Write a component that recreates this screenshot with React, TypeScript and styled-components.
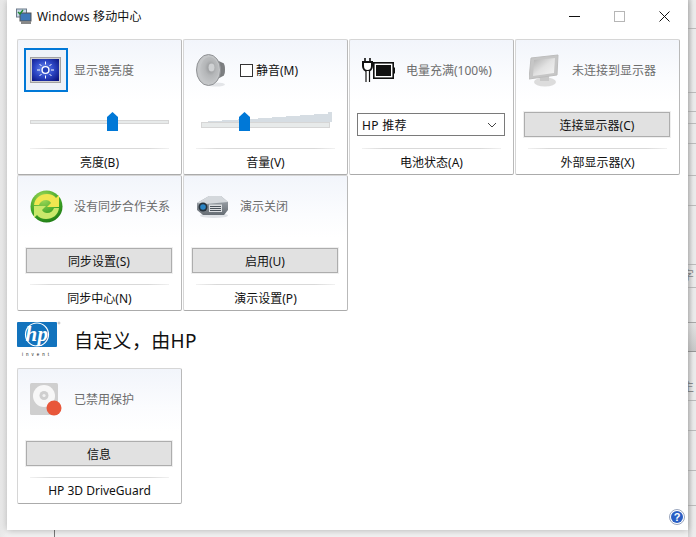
import React from "react";
import styled, { createGlobalStyle } from "styled-components";

const GlobalStyle = createGlobalStyle`
  html, body {
    margin: 0;
    padding: 0;
    background: #f0f0f0;
  }
  body {
    width: 696px;
    height: 537px;
    overflow: hidden;
    font-family: "Noto Sans", "Noto Sans CJK SC", sans-serif;
  }
`;

const Desktop = styled.div`
  width: 696px;
  height: 537px;
  position: relative;
  overflow: hidden;
  background: linear-gradient(90deg, #e8e8e8 0, #f1f1f1 7px);
`;

const BackgroundStrip = styled.div`
  position: absolute;
  top: 0;
  right: 0;
  width: 8px;
  height: 537px;
  overflow: hidden;
  background: linear-gradient(90deg, #d2d2d2, #ececec 5px);
`;

const BackgroundRule = styled.div<{ $top: number }>`
  position: absolute;
  left: 0;
  right: 0;
  top: ${(p) => p.$top}px;
  height: 1px;
  background: #bcbcbc;
`;

const BackgroundBand = styled.div`
  position: absolute;
  left: 0;
  right: 0;
  top: 322px;
  height: 28px;
  background: linear-gradient(180deg, #e4e4e4, #c8c8c8);
  border-top: 1px solid #a8a8a8;
  border-bottom: 1px solid #989898;
`;

const BackgroundGlyph = styled.span<{ $top: number }>`
  position: absolute;
  left: -6px;
  top: ${(p) => p.$top}px;
  font-size: 12px;
  line-height: 14px;
  color: #8a8a8a;
`;

const BackgroundTick = styled.div`
  position: absolute;
  left: 54px;
  bottom: 0;
  width: 1px;
  height: 7px;
  background: #777;
`;

const Window = styled.div`
  position: absolute;
  left: 7px;
  top: 0;
  width: 681px;
  height: 530px;
  background: #fff;
  box-shadow: 0 0 7px rgba(0, 0, 0, 0.28);
  display: flex;
  flex-direction: column;
`;

const TitleBar = styled.div`
  height: 32px;
  display: flex;
  align-items: center;
  padding: 0 1px 0 9px;
  gap: 5px;
  flex-shrink: 0;
`;

const TitleText = styled.span`
  font-size: 12px;
  letter-spacing: 0.2px;
  color: #111;
  flex: 1;
  margin-bottom: 1px;
`;

const CaptionRow = styled.div`
  display: flex;
`;

const CaptionButton = styled.div<{ $faded?: boolean }>`
  width: 45px;
  height: 30px;
  display: flex;
  align-items: center;
  justify-content: center;
  opacity: ${(p) => (p.$faded ? 0.3 : 1)};
`;

const Content = styled.div`
  padding: 7px 0 0 10px;
  flex: 1;
  position: relative;
`;

const Grid = styled.div`
  display: grid;
  grid-template-columns: repeat(4, 165px);
  grid-auto-rows: 136px;
  column-gap: 1px;
  width: 664px;
`;

const Tile = styled.div`
  box-sizing: border-box;
  border: 1px solid #d6d6d6;
  border-bottom: 1px solid #ababab;
  border-right: 1px solid #b9b9b9;
  border-radius: 2px;
  background: linear-gradient(180deg, #f2f5fb 0, #fbfcfe 38px, #fff 62px);
  display: flex;
  flex-direction: column;
  height: 136px;
`;

const TileTop = styled.div`
  height: 60px;
  display: flex;
  align-items: center;
  flex-shrink: 0;
`;

const IconSlot = styled.div`
  width: 56px;
  height: 60px;
  display: flex;
  align-items: center;
  justify-content: center;
  flex-shrink: 0;
`;

const Status = styled.span`
  font-size: 12px;
  color: #6d6d6d;
  white-space: nowrap;
`;

const Middle = styled.div`
  height: 47px;
  padding: 1px 9px 0 8px;
  flex-shrink: 0;
  display: flex;
  flex-direction: column;
  justify-content: center;
`;

const Divider = styled.div`
  height: 1px;
  margin: 0 12px;
  background: linear-gradient(90deg, #f1f1f1, #d9d9d9 15%, #d9d9d9 85%, #f1f1f1);
  flex-shrink: 0;
`;

const TileLabel = styled.div`
  flex: 1;
  display: flex;
  align-items: center;
  justify-content: center;
  font-size: 12px;
  color: #111;
  white-space: nowrap;
`;

const ActionButton = styled.div`
  box-sizing: border-box;
  height: 25px;
  border: 1px solid #adadad;
  outline: 1px solid #efefef;
  background: #e1e1e1;
  display: flex;
  align-items: center;
  justify-content: center;
  font-size: 12px;
  color: #111;
`;

const SelectBox = styled.div`
  box-sizing: border-box;
  height: 23px;
  margin: 0 -1px;
  border: 1px solid #7a7a7a;
  background: #fff;
  display: flex;
  align-items: center;
  justify-content: space-between;
  padding: 0 7px 0 4px;
  font-size: 12px;
  color: #111;
  letter-spacing: 0.3px;
`;

const SliderTrack = styled.div`
  position: relative;
  height: 2px;
  margin: 0 3px 5px 4px;
  background: #e7eaea;
  border: 1px solid #d6d6d6;
`;

const Thumb = styled.svg<{ $left: number; $top: number }>`
  position: absolute;
  left: ${(p) => p.$left}px;
  top: ${(p) => p.$top}px;
  display: block;
`;

const VolumeWrap = styled.div`
  position: relative;
  margin: 0 8px 10px 9px;
  padding-top: 11px;
`;

const VolumeWedge = styled.svg`
  position: absolute;
  top: 0;
  left: 0;
  display: block;
`;

const VolumeTrack = styled.div`
  position: relative;
  height: 4px;
  background: #e7eaea;
  border: 1px solid #d6d6d6;
`;

const MuteRow = styled.div`
  display: flex;
  align-items: center;
  gap: 3px;
  font-size: 12px;
  color: #111;
`;

const MuteBox = styled.span`
  box-sizing: border-box;
  width: 13px;
  height: 13px;
  border: 1px solid #333;
  background: #fff;
`;

const SectionHead = styled.div`
  height: 57px;
  display: flex;
  align-items: center;
  gap: 13px;
  font-size: 19px;
  letter-spacing: 0.3px;
  color: #111;
`;

const HelpIcon = styled.svg`
  position: absolute;
  right: 3px;
  bottom: 5px;
  display: block;
`;

const AppIcon = () => (
  <svg width="16" height="16" viewBox="0 0 16 16">
    <rect x="0.5" y="1" width="10" height="8" fill="#c9d7e8" stroke="#6c7a89" />
    <rect x="4" y="5" width="11" height="8" fill="#3e78b8" stroke="#555" />
    <path d="M2 4l2 2 3-4" fill="none" stroke="#1c8a2e" strokeWidth="1.4" />
    <rect x="5" y="13" width="10" height="3" fill="#888" />
  </svg>
);

const BrightnessIcon = () => (
  <svg width="44" height="44" viewBox="0 0 44 44">
    <rect x="1" y="1" width="42" height="42" fill="#eef2f8" stroke="#0078d7" strokeWidth="2" />
    <rect x="6.5" y="9.5" width="30" height="25" fill="#cfcfcf" stroke="#a2a2a2" />
    <defs>
      <radialGradient id="bscreen" cx="0.45" cy="0.45" r="0.7">
        <stop offset="0" stopColor="#6f8ff0" />
        <stop offset="0.5" stopColor="#2f49c8" />
        <stop offset="1" stopColor="#0c1682" />
      </radialGradient>
    </defs>
    <rect x="8" y="11" width="27" height="22" fill="url(#bscreen)" />
    <circle cx="21.5" cy="22" r="3.4" fill="#2540b8" stroke="#fff" strokeWidth="1.4" />
    <path d="M21.5 13.5v3M21.5 27.5v3M13 22h3M27 22h3M15.5 16l2 2M25.5 26l2 2M27.5 16l-2 2M17.5 26l-2 2" stroke="#fff" strokeWidth="1" />
  </svg>
);

const SpeakerIcon = () => (
  <svg width="32" height="34" viewBox="0 0 32 34">
    <defs>
      <radialGradient id="cone" cx="0.55" cy="0.42" r="0.65">
        <stop offset="0" stopColor="#8f9193" />
        <stop offset="0.45" stopColor="#b4b6b8" />
        <stop offset="1" stopColor="#c6c8ca" />
      </radialGradient>
      <linearGradient id="back" x1="0" y1="0" x2="1" y2="0">
        <stop offset="0" stopColor="#a9abad" />
        <stop offset="1" stopColor="#6c6e70" />
      </linearGradient>
    </defs>
    <ellipse cx="20" cy="31.5" rx="9" ry="2" fill="#e3e5e8" />
    <path d="M14 4l13 6c2 2 2 11 0 13l-13 7z" fill="url(#back)" />
    <ellipse cx="27" cy="16.5" rx="2" ry="6.5" fill="#7d7f81" />
    <ellipse cx="12.5" cy="17" rx="12" ry="15.5" fill="#c4c6c8" stroke="#909295" />
    <ellipse cx="13.5" cy="17" rx="9.5" ry="13" fill="url(#cone)" />
    <ellipse cx="15.5" cy="14.5" rx="3" ry="4" fill="#cfd1d3" />
  </svg>
);

const BatteryIcon = () => (
  <svg width="33" height="24" viewBox="0 0 33 24">
    <rect x="11.8" y="4.8" width="19.4" height="15.4" fill="#fff" stroke="#111" strokeWidth="1.6" />
    <rect x="14" y="7" width="15" height="11" fill="#111" />
    <rect x="32" y="9.5" width="1.5" height="6" fill="#111" />
    <path d="M1 4v4c0 3 2 5 4.5 5S10 11 10 8V4z" fill="#fff" stroke="#111" strokeWidth="2" />
    <path d="M3 0v4M8 0v4" stroke="#111" strokeWidth="1.6" />
    <rect x="4" y="13" width="3" height="11" fill="#fff" />
    <path d="M4 13v11M7.5 13v11" stroke="#111" strokeWidth="1.2" />
  </svg>
);

const MonitorIcon = () => (
  <svg width="30" height="33" viewBox="0 0 30 33">
    <defs>
      <linearGradient id="mscreen" x1="0" y1="0" x2="1" y2="1">
        <stop offset="0" stopColor="#b0b0b0" />
        <stop offset="0.5" stopColor="#e2e2e2" />
        <stop offset="1" stopColor="#f4f4f4" />
      </linearGradient>
    </defs>
    <ellipse cx="16" cy="28" rx="11" ry="4.5" fill="#dcdcdc" />
    <rect x="11" y="22" width="9" height="5" fill="#c8c8c8" />
    <path d="M2 4l27-3-1 20L0 25z" fill="#c6c6c6" stroke="#bdbdbd" />
    <path d="M5 6l21-2-1 15L4 22z" fill="url(#mscreen)" />
  </svg>
);

const SyncIcon = () => (
  <svg width="33" height="33" viewBox="0 0 33 33">
    <defs>
      <radialGradient id="sync" cx="0.4" cy="0.25" r="0.85">
        <stop offset="0" stopColor="#a6dc5a" />
        <stop offset="0.6" stopColor="#3fa527" />
        <stop offset="1" stopColor="#16700f" />
      </radialGradient>
    </defs>
    <circle cx="16.5" cy="16.5" r="16" fill="url(#sync)" />
    <path d="M4 15C5 8 10 4 17 4c4 0 7 1.500 9 4l3-3v12H17l4-4c-1-2-3-3-5-3-3.500 0-6 2-7 5z" fill="#f0e650" />
    <path d="M29 18c-1 7-6 11-13 11-4 0-7-1.500-9-4l-3 3V16h12l-4 4c1 2 3 3 5 3 3.500 0 6-2 7-5z" fill="#c9e86a" />
  </svg>
);

const ProjectorIcon = () => (
  <svg width="33" height="23" viewBox="0 0 33 23">
    <defs>
      <linearGradient id="proj" x1="0" y1="0" x2="0" y2="1">
        <stop offset="0" stopColor="#aab0b6" />
        <stop offset="1" stopColor="#666d74" />
      </linearGradient>
    </defs>
    <ellipse cx="18" cy="20.500" rx="14" ry="2.500" fill="#dfe2e6" />
    <path d="M1 8l12-7h12l7 6v8l-4 5H7l-6-5z" fill="url(#proj)" />
    <path d="M1 8l12-7h12l7 6-22 2z" fill="#d4d8dc" />
    <circle cx="7" cy="12" r="4.500" fill="#26323c" />
    <circle cx="7" cy="12" r="2.800" fill="#2a84c4" />
    <rect x="13" y="9.500" width="13" height="7.500" fill="#dadde0" />
    <path d="M14 11.500h11M14 13.500h11M14 15.500h11" stroke="#4b535b" strokeWidth="1" />
  </svg>
);

const DriveIcon = () => (
  <svg width="32" height="33" viewBox="0 0 32 33">
    <rect x="0" y="0" width="28" height="32" rx="1.5" fill="#cfcfcf" />
    <circle cx="14" cy="13" r="11" fill="#f7f7f7" />
    <circle cx="14" cy="12.5" r="4.5" fill="#cfcfcf" />
    <circle cx="14" cy="12.5" r="1.6" fill="#f2f2f2" />
    <circle cx="24" cy="25" r="7.5" fill="#e8573a" />
  </svg>
);

const HpLogo = () => (
  <svg width="44" height="37" viewBox="0 0 44 37">
    <rect x="0" y="1" width="40" height="25" rx="1" fill="#1273bd" />
    <circle cx="42" cy="2" r="1" fill="none" stroke="#888" strokeWidth="0.5" />
    <ellipse cx="20" cy="13.500" rx="11.500" ry="11.500" fill="none" stroke="#fff" strokeWidth="1.200" />
    <text x="20" y="19.500" textAnchor="middle" fontSize="21" fontStyle="italic" fontWeight="700" fill="#fff" fontFamily="Liberation Serif, serif">hp</text>
    <text x="20" y="35" textAnchor="middle" fontSize="4.500" letterSpacing="3" fill="#222" fontFamily="Liberation Sans, sans-serif">invent</text>
  </svg>
);

const Chevron = () => (
  <svg width="10" height="6" viewBox="0 0 10 6">
    <path d="M1 1l4 4 4-4" fill="none" stroke="#444" strokeWidth="1" />
  </svg>
);

const ThumbShape = ({ left, top }: { left: number; top: number }) => (
  <Thumb $left={left} $top={top} width="11" height="19" viewBox="0 0 11 19">
    <path d="M0 5l5.500-5L11 5v14H0z" fill="#0078d7" />
  </Thumb>
);

interface TileData {
  icon: React.ReactNode;
  status: React.ReactNode;
  middle?: React.ReactNode;
  label: string;
}

const row: TileData[] = [
  {
    icon: <BrightnessIcon />,
    status: <Status>显示器亮度</Status>,
    middle: (
      <SliderTrack>
        <ThumbShape left={76} top={-9} />
      </SliderTrack>
    ),
    label: "亮度(B)",
  },
  {
    icon: <SpeakerIcon />,
    status: (
      <MuteRow>
        <MuteBox />
        静音(M)
      </MuteRow>
    ),
    middle: (
      <VolumeWrap>
        <VolumeWedge width="131" height="11" viewBox="0 0 131 11">
          <path d="M7 11v-1h14V9h16V8h20V7h14V6h14V5h14V4h14V3h14V1h14V0h0v11z" fill="#d6dde3" />
        </VolumeWedge>
        <VolumeTrack>
          <ThumbShape left={37} top={-11} />
        </VolumeTrack>
      </VolumeWrap>
    ),
    label: "音量(V)",
  },
  {
    icon: <BatteryIcon />,
    status: <Status>电量充满(100%)</Status>,
    middle: (
      <SelectBox>
        HP 推荐
        <Chevron />
      </SelectBox>
    ),
    label: "电池状态(A)",
  },
  {
    icon: <MonitorIcon />,
    status: <Status>未连接到显示器</Status>,
    middle: <ActionButton>连接显示器(C)</ActionButton>,
    label: "外部显示器(X)",
  },
  {
    icon: <SyncIcon />,
    status: <Status>没有同步合作关系</Status>,
    middle: <ActionButton>同步设置(S)</ActionButton>,
    label: "同步中心(N)",
  },
  {
    icon: <ProjectorIcon />,
    status: <Status>演示关闭</Status>,
    middle: <ActionButton>启用(U)</ActionButton>,
    label: "演示设置(P)",
  },
];

const driveTile: TileData = {
  icon: <DriveIcon />,
  status: <Status>已禁用保护</Status>,
  middle: <ActionButton>信息</ActionButton>,
  label: "HP 3D DriveGuard",
};

const stripRules = [28, 92, 111, 123, 143, 175, 205, 264, 287, 400, 430, 470, 505];

const MobilityTile = ({ tile }: { tile: TileData }) => (
  <Tile>
    <TileTop>
      <IconSlot>{tile.icon}</IconSlot>
      {tile.status}
    </TileTop>
    <Middle>{tile.middle}</Middle>
    <Divider />
    <TileLabel>{tile.label}</TileLabel>
  </Tile>
);

export default function App() {
  return (
    <>
      <GlobalStyle />
      <Desktop>
        <BackgroundTick />
        <BackgroundStrip>
          {stripRules.map((top) => (
            <BackgroundRule key={top} $top={top} />
          ))}
          <BackgroundBand />
          <BackgroundGlyph $top={269}>字</BackgroundGlyph>
          <BackgroundGlyph $top={380}>主</BackgroundGlyph>
        </BackgroundStrip>
        <Window>
          <TitleBar>
            <AppIcon />
            <TitleText>Windows 移动中心</TitleText>
            <CaptionRow>
              <CaptionButton>
                <svg width="11" height="11" viewBox="0 0 11 11">
                  <path d="M0 5.500h11" stroke="#111" strokeWidth="1" />
                </svg>
              </CaptionButton>
              <CaptionButton $faded>
                <svg width="11" height="11" viewBox="0 0 11 11">
                  <rect x="0.500" y="0.500" width="10" height="10" fill="none" stroke="#111" />
                </svg>
              </CaptionButton>
              <CaptionButton>
                <svg width="11" height="11" viewBox="0 0 11 11">
                  <path d="M0.500 0.500l10 10M10.500 0.500l-10 10" stroke="#111" strokeWidth="1" />
                </svg>
              </CaptionButton>
            </CaptionRow>
          </TitleBar>
          <Content>
            <Grid>
              {row.map((t) => (
                <MobilityTile key={t.label} tile={t} />
              ))}
            </Grid>
            <SectionHead>
              <HpLogo />
              自定义，由HP
            </SectionHead>
            <Grid>
              <MobilityTile tile={driveTile} />
            </Grid>
            <HelpIcon width="16" height="16" viewBox="0 0 16 16">
              <circle cx="8" cy="8" r="7.500" fill="#fff" stroke="#9aa6bd" />
              <circle cx="8" cy="8" r="6" fill="#2a5fc4" />
              <text x="8" y="12" textAnchor="middle" fontSize="11" fontWeight="700" fill="#fff" fontFamily="Liberation Sans, sans-serif">?</text>
            </HelpIcon>
          </Content>
        </Window>
      </Desktop>
    </>
  );
}
